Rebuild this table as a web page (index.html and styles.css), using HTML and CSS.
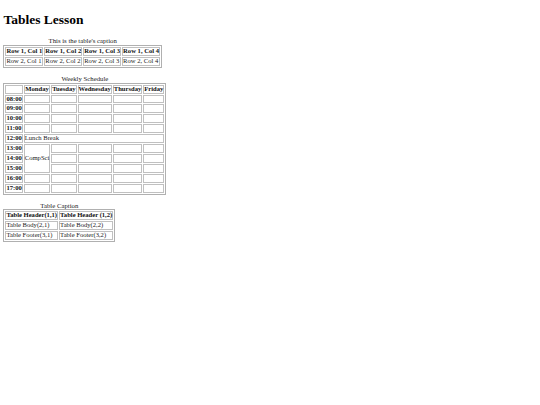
FILE: index.html
```html
<!DOCTYPE html>
<html>
<head>
<meta charset="utf-8">
<title>Tables Lesson</title>
<link rel="stylesheet" href="styles.css">
</head>
<body>
<h1 class="title">Tables Lesson</h1>
<table class="grid">
  <caption>This is the table's caption</caption>
  <tr><th>Row 1, Col 1</th><th>Row 1, Col 2</th><th>Row 1, Col 3</th><th>Row 1, Col 4</th></tr>
  <tr><td>Row 2, Col 1</td><td>Row 2, Col 2</td><td>Row 2, Col 3</td><td>Row 2, Col 4</td></tr>
</table>
<br>
<table class="grid">
  <caption>Weekly Schedule</caption>
  <tr><th></th><th>Monday</th><th>Tuesday</th><th>Wednesday</th><th>Thursday</th><th>Friday</th></tr>
  <tr><th>08:00</th><td></td><td></td><td></td><td></td><td></td></tr>
  <tr><th>09:00</th><td></td><td></td><td></td><td></td><td></td></tr>
  <tr><th>10:00</th><td></td><td></td><td></td><td></td><td></td></tr>
  <tr><th>11:00</th><td></td><td></td><td></td><td></td><td></td></tr>
  <tr><th>12:00</th><td colspan="5">Lunch Break</td></tr>
  <tr><th>13:00</th><td rowspan="3">CompSci</td><td></td><td></td><td></td><td></td></tr>
  <tr><th>14:00</th><td></td><td></td><td></td><td></td></tr>
  <tr><th>15:00</th><td></td><td></td><td></td><td></td></tr>
  <tr><th>16:00</th><td></td><td></td><td></td><td></td><td></td></tr>
  <tr><th>17:00</th><td></td><td></td><td></td><td></td><td></td></tr>
</table>
<br>
<table class="grid">
  <caption>Table Caption</caption>
  <thead><tr><th>Table Header(1,1)</th><th>Table Header (1,2)</th></tr></thead>
  <tbody><tr><td>Table Body(2,1)</td><td>Table Body(2,2)</td></tr></tbody>
  <tfoot><tr><td>Table Footer(3,1)</td><td>Table Footer(3,2)</td></tr></tfoot>
</table>
</body>
</html>
```
FILE: styles.css
```css
html {
  background: #fff;
}
body {
  margin: 3.4px;
  font-family: "Liberation Serif", "Times New Roman", serif;
  font-size: 6.75px;
  color: #1a1a1a;
}
.title {
  font-size: 13.5px;
  line-height: 16px;
  margin: 9px 0;
  font-weight: bold;
  color: #000;
}
.grid {
  border: 1px solid #b0b0b0;
  border-spacing: 1px;
  border-collapse: separate;
}
.grid caption {
  text-align: center;
  line-height: 7.7px;
}
.grid th,
.grid td {
  border: 1px solid #c0c0c0;
  padding: 0;
  font-size: 6.6px;
  line-height: 6.9px;
}
.grid th {
  font-weight: bold;
  color: #111;
}
.grid td {
  text-align: left;
}
```
